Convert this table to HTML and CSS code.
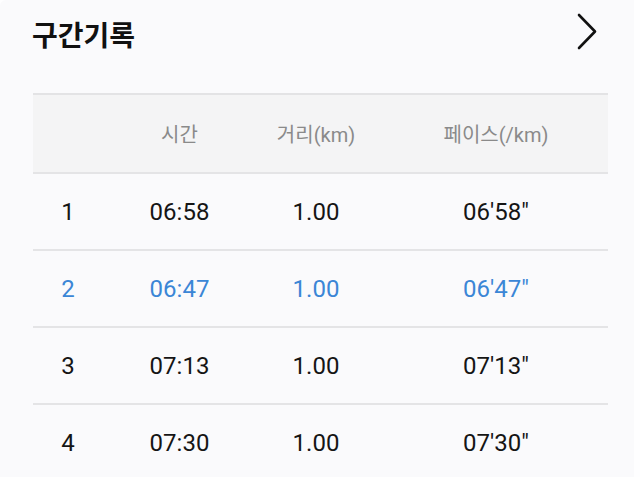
FILE: index.html
```html
<!DOCTYPE html>
<html lang="ko">
<head>
<meta charset="utf-8">
<link rel="stylesheet" href="styles.css">
</head>
<body>
<div class="card">
  <div class="top">
    <h1 class="title">구간기록</h1>
    <svg class="chev" width="20" height="38" viewBox="0 0 20 38"><path d="M2 2 L18 18.5 L2 35" fill="none" stroke="#111" stroke-width="2.6" stroke-linecap="round" stroke-linejoin="round"/></svg>
  </div>
  <div class="table">
    <div class="row head">
      <div class="c c1"></div>
      <div class="c c2">시간</div>
      <div class="c c3">거리(km)</div>
      <div class="c c4">페이스(/km)</div>
    </div>
    <div class="row">
      <div class="c c1">1</div>
      <div class="c c2">06:58</div>
      <div class="c c3">1.00</div>
      <div class="c c4">06'58"</div>
    </div>
    <div class="row active">
      <div class="c c1">2</div>
      <div class="c c2">06:47</div>
      <div class="c c3">1.00</div>
      <div class="c c4">06'47"</div>
    </div>
    <div class="row">
      <div class="c c1">3</div>
      <div class="c c2">07:13</div>
      <div class="c c3">1.00</div>
      <div class="c c4">07'13"</div>
    </div>
    <div class="row">
      <div class="c c1">4</div>
      <div class="c c2">07:30</div>
      <div class="c c3">1.00</div>
      <div class="c c4">07'30"</div>
    </div>
  </div>
</div>
</body>
</html>
```
FILE: styles.css
```css
html, body {
  margin: 0;
  padding: 0;
  background: #fefeff;
}
body {
  font-family: "Roboto", "Noto Sans CJK KR", sans-serif;
  color: #151515;
  overflow: hidden;
}
.card {
  width: 634px;
  height: 477px;
  background: #fafafc;
  border-top-left-radius: 6px;
  overflow: hidden;
}
.top {
  height: 68px;
  display: flex;
  align-items: center;
  justify-content: space-between;
  padding: 0 37px 0 32px;
}
.title {
  margin: 0;
  font-family: "Noto Sans CJK KR", sans-serif;
  font-size: 28px;
  font-weight: 700;
  color: #111;
  line-height: 1;
  position: relative;
  top: 0;
}
.chev {
  display: block;
  position: relative;
  top: -2px;
}
.table {
  margin: 25px 0 0 33px;
  width: 575px;
  border-top: 2px solid #e3e3e5;
}
.row {
  display: grid;
  grid-template-columns: 70px 150px 126px 1fr;
  height: 75px;
  align-items: center;
  border-bottom: 2px solid #e4e4e6;
  font-size: 24px;
}
.row.head {
  height: 77px;
  background: #f4f4f5;
  font-size: 20px;
  color: #8a8a8a;
}
.row.head .c {
  font-family: "Noto Sans CJK KR", "Roboto", sans-serif;
}
.row.head .c3, .row.head .c4 {
  font-family: "Roboto", "Noto Sans CJK KR", sans-serif;
}
.row.active {
  color: #3b86d6;
}
.c {
  text-align: center;
  white-space: nowrap;
}
.c2 {
  padding-left: 3px;
}
.c4 {
  padding-left: 5px;
}
```
